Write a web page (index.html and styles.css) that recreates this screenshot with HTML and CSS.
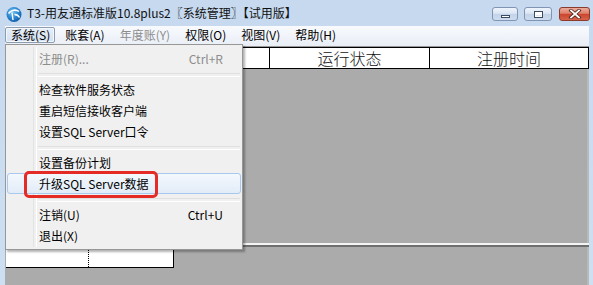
FILE: index.html
```html
<!DOCTYPE html>
<html lang="zh">
<head>
    <meta charset="UTF-8">
    <title>T3-用友通标准版10.8plus2〖系统管理〗【试用版】</title>
    <link rel="stylesheet" href="styles.css">
</head>
<body>
    <div class="window">
        <div class="titlebar">
            <svg class="app-icon" width="18" height="18" viewBox="0 0 18 18">
                <defs>
                    <radialGradient id="ball" cx="40%" cy="35%" r="70%">
                        <stop offset="0" stop-color="#7cc6f2"/>
                        <stop offset="0.6" stop-color="#2583cf"/>
                        <stop offset="1" stop-color="#17589e"/>
                    </radialGradient>
                </defs>
                <circle cx="9" cy="9.5" r="7.5" fill="url(#ball)"/>
                <path d="M3.5 8.5c2.5-3.5 7.5-4.5 10.5-2" stroke="#fff" stroke-width="1.6" fill="none"/>
                <path d="M7 7.5l1 7.5M9.5 9.5c2 0 4 1 5 3" stroke="#fff" stroke-width="1.4" fill="none"/>
            </svg>
            <span class="title">T3-用友通标准版10.8plus2〖系统管理〗【试用版】</span>
            <div class="caption-btns">
                <span class="cbtn cbtn-min"><i></i></span>
                <span class="cbtn cbtn-max"><i></i></span>
                <span class="cbtn cbtn-close">
                    <svg width="14" height="10" viewBox="0 0 14 10">
                        <path d="M3 1.5l8 7M11 1.5l-8 7" stroke="#4a2018" stroke-width="3.4" stroke-linecap="square"/>
                        <path d="M3 1.5l8 7M11 1.5l-8 7" stroke="#fff" stroke-width="1.8" stroke-linecap="square"/>
                    </svg>
                </span>
            </div>
        </div>

        <div class="inner">
            <div class="menubar">
                <span class="mitem active">系统(S)</span>
                <span class="mitem">账套(A)</span>
                <span class="mitem disabled">年度账(Y)</span>
                <span class="mitem">权限(O)</span>
                <span class="mitem">视图(V)</span>
                <span class="mitem">帮助(H)</span>
            </div>

            <div class="client">
                <div class="grid-head">
                    <div class="gcell gcell-1"></div>
                    <div class="gcell gcell-2">运行状态</div>
                    <div class="gcell gcell-3">注册时间</div>
                </div>
                <div class="upper"></div>
                <div class="splitter"></div>
                <div class="lower">
                    <div class="lrow">
                        <div class="lcell lcell-a"></div>
                        <div class="lcell lcell-b"></div>
                    </div>
                </div>
            </div>
        </div>

        <div class="dropdown">
            <div class="ditem disabled"><span>注册(R)...</span><span class="key">Ctrl+R</span></div>
            <div class="dsep"></div>
            <div class="ditem"><span>检查软件服务状态</span></div>
            <div class="ditem"><span>重启短信接收客户端</span></div>
            <div class="ditem"><span>设置SQL Server口令</span></div>
            <div class="dsep"></div>
            <div class="ditem"><span>设置备份计划</span></div>
            <div class="ditem hover"><span>升级SQL Server数据</span><span class="mark"></span></div>
            <div class="dsep"></div>
            <div class="ditem"><span>注销(U)</span><span class="key">Ctrl+U</span></div>
            <div class="ditem"><span>退出(X)</span></div>
        </div>
    </div>
</body>
</html>
```

FILE: styles.css
```css
* {
    margin: 0;
    padding: 0;
    box-sizing: border-box;
}

body {
    width: 593px;
    height: 285px;
    overflow: hidden;
    font-family: "Noto Sans CJK SC", "Noto Sans", sans-serif;
    font-size: 12px;
    color: #000;
    background: #c8daef;
}

.window {
    position: relative;
    width: 593px;
    height: 285px;
    display: flex;
    flex-direction: column;
    background: linear-gradient(#c6d9ef, #cddff2);
}

/* 标题栏 */
.titlebar {
    height: 26px;
    display: flex;
    align-items: center;
    flex-shrink: 0;
}

.app-icon {
    margin-left: 5px;
    margin-top: 1px;
}

.title {
    margin-left: 4px;
    font-size: 12px;
    line-height: 16px;
    color: #111;
}

.caption-btns {
    margin-left: auto;
    margin-right: 3px;
    display: flex;
    gap: 6px;
    align-self: flex-start;
    margin-top: 7px;
}

.cbtn {
    height: 14px;
    border: 1px solid #7f95b3;
    border-radius: 3px;
    background: linear-gradient(#eef4fb 0%, #dbe6f3 45%, #c3d3e8 50%, #cfdcee 100%);
    display: flex;
    align-items: center;
    justify-content: center;
}

.cbtn-min {
    width: 26px;
}

.cbtn-min i {
    width: 9px;
    height: 3px;
    margin-top: 5px;
    background: #fff;
    border: 1px solid #3b4b62;
}

.cbtn-max {
    width: 28px;
}

.cbtn-max i {
    width: 9px;
    height: 7px;
    border: 1px solid #3b4b62;
    box-shadow: inset 0 0 0 1px #fff, inset 0 2px 0 1px #fff;
    background: #dfe8f4;
}

.cbtn-close {
    width: 31px;
    margin-left: 1px;
    border-color: #8a3b2c;
    background: linear-gradient(#ecab9b 0%, #df7f69 45%, #c9442e 50%, #d9634a 100%);
}

/* 菜单栏 */
.inner {
    flex: 1;
    display: flex;
    flex-direction: column;
    margin: 0 4px 0 5px;
}

.menubar {
    height: 20px;
    display: flex;
    align-items: flex-start;
    padding-top: 1px;
    background: linear-gradient(#f8fafd, #e9eef6);
}

.mitem {
    height: 16px;
    line-height: 14px;
    padding: 0 4px 0 5px;
    margin-right: 4px;
    border: 1px solid transparent;
    border-radius: 2px;
    white-space: nowrap;
}

.mitem.active {
    border-color: #8e9cb0;
    background: linear-gradient(#e6eef8, #d4e1f1);
    box-shadow: inset 0 0 0 1px #f4f8fc;
}

.mitem.disabled {
    color: #8d8d8d;
}

/* 客户区 */
.client {
    flex: 1;
    display: flex;
    flex-direction: column;
    background: #ababab;
    border-top: 1px solid #969696;
}

.grid-head {
    height: 22px;
    display: flex;
    background: #fff;
    border-top: 1px solid #000;
    border-bottom: 1px solid #000;
}

.gcell {
    border-right: 1px solid #000;
    font-size: 16px;
    font-weight: 300;
    line-height: 20px;
    text-align: center;
    color: #111;
}

.gcell-1 {
    width: 265px;
}

.gcell-2 {
    width: 160px;
}

.gcell-3 {
    flex: 1;
}

.upper {
    height: 174px;
    border-right: 2px solid #b9b9b9;
}

.splitter {
    height: 4px;
    border-top: 2px solid #f4f4f4;
    border-bottom: 2px solid #6f6f6f;
}

.lower {
    flex: 1;
    padding-top: 1px;
    border-right: 2px solid #b9b9b9;
}

.lrow {
    display: flex;
    width: 168px;
    height: 20px;
    margin-left: 1px;
    background: #fff;
    border-right: 1px solid #000;
    border-bottom: 1px solid #000;
}

.lcell-a {
    width: 83px;
    border-right: 1px dotted #000;
}

.lcell-b {
    flex: 1;
}

/* 下拉菜单 */
.dropdown {
    position: absolute;
    left: 5px;
    top: 44px;
    width: 238px;
    padding: 3px 2px;
    background: #f0f0f0;
    border: 1px solid #979797;
    box-shadow: 2px 2px 2px rgba(0, 0, 0, 0.3);
}

.dropdown::before {
    content: "";
    position: absolute;
    left: 27px;
    top: 2px;
    bottom: 2px;
    width: 2px;
    border-left: 1px solid #e2e3e3;
    border-right: 1px solid #fff;
}

.ditem {
    position: relative;
    height: 21px;
    display: flex;
    align-items: center;
    padding: 0 17px 0 31px;
    white-space: nowrap;
}

.ditem .key {
    margin-left: auto;
}

.ditem.disabled {
    color: #8d8d8d;
}

.ditem.hover {
    border: 1px solid #a8c8ee;
    border-radius: 3px;
    margin: 0 -1px;
    padding-left: 31px;
    background: linear-gradient(#f3f8fd, #e2ecf8);
}

.mark {
    position: absolute;
    left: 16px;
    top: -3px;
    width: 134px;
    height: 27px;
    border: 3px solid #e52b26;
    border-radius: 5px;
}

.dsep {
    height: 10px;
    margin-left: 30px;
    position: relative;
}

.dsep::after {
    content: "";
    position: absolute;
    left: 0;
    right: 0;
    top: 4px;
    height: 2px;
    border-top: 1px solid #e0e0e0;
    border-bottom: 1px solid #fff;
}
```
